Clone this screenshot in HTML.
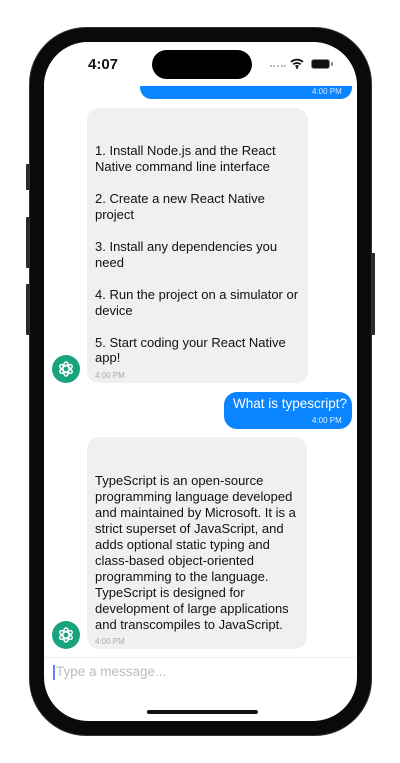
<!DOCTYPE html>
<html><head><style>
*{margin:0;padding:0;box-sizing:border-box}
body{width:400px;height:763px;background:#fff;position:relative;overflow:hidden;font-family:"Liberation Sans",sans-serif}
.a{position:absolute}
.frame{left:30px;top:28px;width:341px;height:707px;background:#0a0a0a;border-radius:56px;box-shadow:0 0 0 1px #333}
.screen{left:44px;top:42px;width:313px;height:679px;background:#fff;border-radius:44px;overflow:hidden}
.btn{background:#2a2a2a;width:5px;border-radius:1px}
.t{position:absolute;font-size:13px;color:#111;white-space:nowrap;line-height:16px}
.tm{position:absolute;font-size:8px;color:#aaa}
.gray{background:#f0f0f0;border-radius:12px}
.blue{background:#0a84ff;border-radius:13px}
.av{width:28px;height:28px;border-radius:50%;background:#19a37f}
</style></head><body>
<div class="a btn" style="left:26px;top:164px;height:26px"></div>
<div class="a btn" style="left:26px;top:217px;height:51px"></div>
<div class="a btn" style="left:26px;top:284px;height:51px"></div>
<div class="a btn" style="left:370px;top:253px;height:82px"></div>
<div class="a frame"></div>
<div class="a screen">
 <div class="a blue" style="left:96px;top:34px;width:212px;height:23px"></div>
 <div class="a" style="left:0;top:0;width:313px;height:44px;background:#fff"></div>
 <div class="tm" style="left:268px;top:45px;color:#d8e8ff">4:00 PM</div>
 <div class="a gray" style="left:43px;top:66px;width:221px;height:275px"></div>
 <div class="a gray" style="left:43px;top:395px;width:220px;height:212px"></div>
 <div class="a blue" style="left:180px;top:350px;width:128px;height:37px"></div>
</div>
<!-- status -->
<div class="a" style="left:88px;top:56px;font-size:15px;font-weight:bold;color:#111">4:07</div>
<div class="a" style="left:152px;top:50px;width:100px;height:29px;background:#000;border-radius:15px"></div>
<div class="a" style="left:270px;top:65px;width:16px;height:2px;border-top:2px dotted #bbb"></div>
<svg class="a" style="left:290px;top:58px" width="14" height="11" viewBox="0 0 14 11"><path d="M1 4a9 9 0 0 1 12 0M3.3 6.3a6 6 0 0 1 7.4 0M5.5 8.5a3 3 0 0 1 3 0" stroke="#111" stroke-width="1.8" fill="none"/><circle cx="7" cy="10" r="1" fill="#111"/></svg>
<div class="a" style="left:311px;top:59px;width:19px;height:10px;border-radius:3px;background:#111;border:1px solid #888"></div>
<div class="a" style="left:331px;top:62px;width:2px;height:4px;background:#888;border-radius:1px"></div>
<!-- msg 1 text -->
<div class="t" style="left:95px;top:143px">1. Install Node.js and the React</div>
<div class="t" style="left:95px;top:159px">Native command line interface</div>
<div class="t" style="left:95px;top:191px">2. Create a new React Native</div>
<div class="t" style="left:95px;top:207px">project</div>
<div class="t" style="left:95px;top:239px">3. Install any dependencies you</div>
<div class="t" style="left:95px;top:255px">need</div>
<div class="t" style="left:95px;top:287px">4. Run the project on a simulator or</div>
<div class="t" style="left:95px;top:303px">device</div>
<div class="t" style="left:95px;top:335px">5. Start coding your React Native</div>
<div class="t" style="left:95px;top:350px">app!</div>
<div class="tm" style="left:95px;top:371px">4:00 PM</div>
<div class="a av" style="left:52px;top:355px"></div>
<svg class="a" style="left:56px;top:359px" width="20" height="20" viewBox="0 0 20 20" fill="none" stroke="#fff" stroke-width="1.4"><g transform="translate(10 10)"><ellipse rx="3" ry="7" transform="rotate(0)"/><ellipse rx="3" ry="7" transform="rotate(60)"/><ellipse rx="3" ry="7" transform="rotate(120)"/></g></svg>
<!-- blue 2 -->
<div class="a" style="left:233px;top:396px;font-size:13.5px;color:#fff">What is typescript?</div>
<div class="tm" style="left:312px;top:416px;color:#e0eeff">4:00 PM</div>
<!-- msg 2 -->
<div class="t" style="left:95px;top:473px">TypeScript is an open-source</div>
<div class="t" style="left:95px;top:489px">programming language developed</div>
<div class="t" style="left:95px;top:505px">and maintained by Microsoft. It is a</div>
<div class="t" style="left:95px;top:521px">strict superset of JavaScript, and</div>
<div class="t" style="left:95px;top:537px">adds optional static typing and</div>
<div class="t" style="left:95px;top:553px">class-based object-oriented</div>
<div class="t" style="left:95px;top:569px">programming to the language.</div>
<div class="t" style="left:95px;top:585px">TypeScript is designed for</div>
<div class="t" style="left:95px;top:601px">development of large applications</div>
<div class="t" style="left:95px;top:617px">and transcompiles to JavaScript.</div>
<div class="tm" style="left:95px;top:637px">4:00 PM</div>
<div class="a av" style="left:52px;top:621px"></div>
<svg class="a" style="left:56px;top:625px" width="20" height="20" viewBox="0 0 20 20" fill="none" stroke="#fff" stroke-width="1.4"><g transform="translate(10 10)"><ellipse rx="3" ry="7"/><ellipse rx="3" ry="7" transform="rotate(60)"/><ellipse rx="3" ry="7" transform="rotate(120)"/></g></svg>
<!-- input -->
<div class="a" style="left:44px;top:657px;width:313px;height:1px;background:#eee"></div>
<div class="a" style="left:53px;top:665px;width:2px;height:15px;background:#6b7cf0"></div>
<div class="a" style="left:56px;top:664px;font-size:13.5px;color:#bbb">Type a message...</div>
<div class="a" style="left:147px;top:710px;width:111px;height:4px;background:#111;border-radius:2px"></div>
</body></html>
